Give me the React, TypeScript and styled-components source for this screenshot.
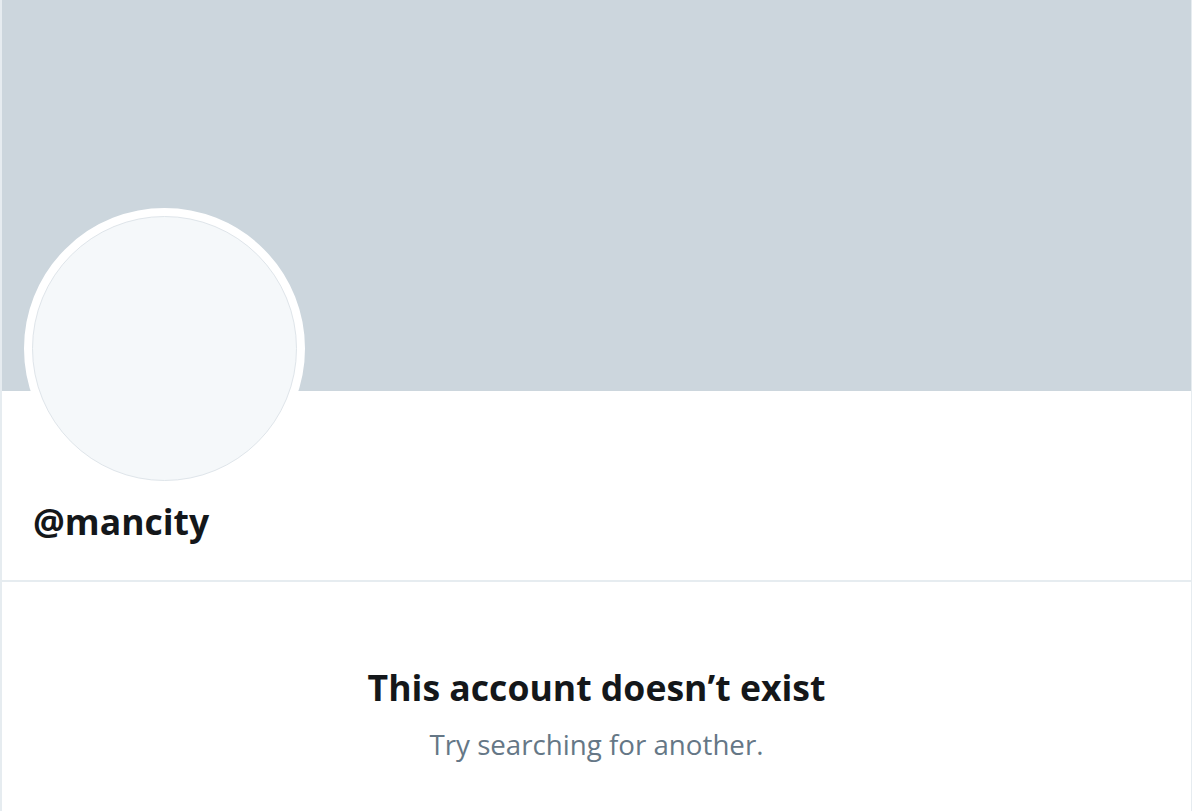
import React from "react";
import styled, { createGlobalStyle } from "styled-components";

const Global = createGlobalStyle`
  html, body { margin: 0; padding: 0; background: #ffffff; }
  body { font-family: "Open Sans", "Noto Sans", Arial, sans-serif; }
`;

const Column = styled.main`
  width: 1189px;
  min-height: 811px;
  border-left: 2px solid #e6ecf0;
  border-right: 1px solid #e6ecf0;
  box-sizing: content-box;
  background: #ffffff;
`;

const Banner = styled.div`
  height: 391px;
  background: #ccd6dd;
`;

const ProfileHeader = styled.section`
  position: relative;
  padding: 0 30px;
  height: 189px;
  border-bottom: 2px solid #e6ecf0;
  display: flex;
  flex-direction: column;
  justify-content: flex-end;
`;

const AvatarRing = styled.div`
  position: absolute;
  left: 22px;
  top: -183px;
  width: 265px;
  height: 265px;
  border-radius: 50%;
  border: 8px solid #ffffff;
  background: #ffffff;
`;

const AvatarInner = styled.div`
  width: 100%;
  height: 100%;
  box-sizing: border-box;
  border-radius: 50%;
  background: #f5f8fa;
  border: 1px solid #dfe5ea;
`;

const Handle = styled.h1`
  margin: 0 0 37px 1px;
  font-size: 35.5px;
  font-weight: 700;
  color: #14171a;
  line-height: 1.2;
`;

const Empty = styled.section`
  display: flex;
  flex-direction: column;
  align-items: center;
  padding-top: 82px;
`;

const Title = styled.h2`
  margin: 0;
  font-size: 35.6px;
  font-weight: 700;
  color: #14171a;
  line-height: 46px;
`;

const Subtitle = styled.p`
  margin: 16px 0 0;
  font-size: 27.7px;
  font-weight: 400;
  color: #657786;
  line-height: 36px;
`;

export default function App() {
  return (
    <>
      <Global />
      <Column>
        <Banner />
        <ProfileHeader>
          <AvatarRing>
            <AvatarInner />
          </AvatarRing>
          <Handle>@mancity</Handle>
        </ProfileHeader>
        <Empty>
          <Title>This account doesn’t exist</Title>
          <Subtitle>Try searching for another.</Subtitle>
        </Empty>
      </Column>
    </>
  );
}
